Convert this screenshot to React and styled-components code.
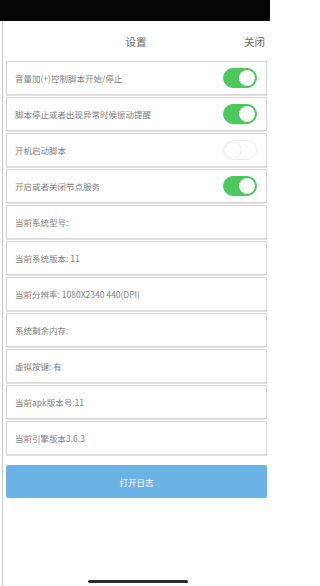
import React, { useState } from 'react'
import styled, { createGlobalStyle } from 'styled-components'

const GlobalStyle = createGlobalStyle`
  html, body {
    margin: 0;
    padding: 0;
    background: #fff;
    font-family: "Noto Sans CJK SC", "Liberation Sans", sans-serif;
  }
`

const Screen = styled.div`
  width: 270px;
  height: 586px;
  display: flex;
  flex-direction: column;
  background: #fff;
  overflow: hidden;
`

const StatusBar = styled.div`
  height: 21px;
  background: #050505;
  flex-shrink: 0;
`

const Page = styled.div`
  flex: 1;
  display: flex;
  flex-direction: column;
  border-left: 1px solid #c9c9c9;
  margin-left: 2px;
  position: relative;
`

const Header = styled.div`
  height: 40px;
  display: grid;
  grid-template-columns: 1fr auto 1fr;
  align-items: center;
  padding: 0 5px 0 0;
  font-size: 10.5px;
  color: #6a6a6a;
`

const Title = styled.div`
  grid-column: 2;
  margin-left: 4px;
`

const Close = styled.div`
  grid-column: 3;
  justify-self: end;
`

const List = styled.div`
  display: flex;
  flex-direction: column;
  gap: 2px;
  padding: 0 3px 0 3px;
`

const Row = styled.div`
  height: 32px;
  border: 1px solid #d4d4d4;
  box-shadow: 0 1px 0 #e6e6e6;
  display: flex;
  align-items: center;
  justify-content: space-between;
  padding: 0 9px 0 8px;
  font-size: 8.5px;
  color: #7d7d7d;
`

const Switch = styled.button`
  width: 34px;
  height: 20px;
  border-radius: 10px;
  border: 1px solid ${p => (p.$on ? '#4cc95c' : '#ececec')};
  background: ${p => (p.$on ? '#4cc95c' : '#fdfdfd')};
  position: relative;
  padding: 0;
  cursor: pointer;

  &::after {
    content: '';
    position: absolute;
    top: 1px;
    left: ${p => (p.$on ? '15px' : '1px')};
    width: 16px;
    height: 16px;
    border-radius: 50%;
    background: #fff;
    box-shadow: 0 0 1px rgba(0, 0, 0, 0.25);
  }
`

const LogButton = styled.button`
  margin: 10px 3px 0 3px;
  height: 33px;
  border: none;
  border-radius: 2px;
  background: #6bb3e4;
  color: #fff;
  font-size: 8.5px;
  font-family: inherit;
`

const HomeBar = styled.div`
  position: absolute;
  left: 85px;
  bottom: 3px;
  width: 100px;
  height: 3px;
  border-radius: 2px;
  background: #2c2c2c;
`

const toggles = [
  { label: '音量加(+)控制脚本开始/停止', on: true },
  { label: '脚本停止或者出现异常时候振动提醒', on: true },
  { label: '开机启动脚本', on: false },
  { label: '开启或者关闭节点服务', on: true },
]

const infos = [
  '当前系统型号:',
  '当前系统版本: 11',
  '当前分辨率: 1080X2340 440(DPI)',
  '系统剩余内存:',
  '虚拟按键: 有',
  '当前apk版本号:11',
  '当前引擎版本3.6.3',
]

export default function App() {
  const [state, setState] = useState(toggles.map(t => t.on))

  const flip = i => setState(s => s.map((v, j) => (j === i ? !v : v)))

  return (
    <Screen>
      <GlobalStyle />
      <StatusBar />
      <Page>
        <Header>
          <Title>设置</Title>
          <Close>关闭</Close>
        </Header>
        <List>
          {toggles.map((t, i) => (
            <Row key={t.label}>
              <span>{t.label}</span>
              <Switch $on={state[i]} onClick={() => flip(i)} />
            </Row>
          ))}
          {infos.map(text => (
            <Row key={text}>
              <span>{text}</span>
            </Row>
          ))}
        </List>
        <LogButton>打开日志</LogButton>
        <HomeBar />
      </Page>
    </Screen>
  )
}
